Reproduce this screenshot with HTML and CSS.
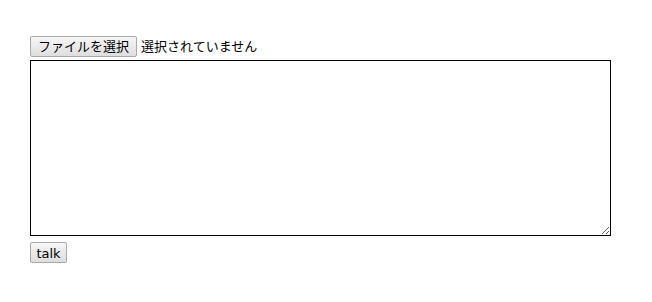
FILE: index.html
```html
<!DOCTYPE html>
<html lang="ja">
<head>
<meta charset="utf-8">
<title>talk</title>
<link rel="stylesheet" href="styles.css">
</head>
<body>
<form class="talk-form">
  <div class="file-row">
    <label class="btn file-btn">ファイルを選択<input type="file" class="file-input"></label>
    <span class="file-status">選択されていません</span>
  </div>
  <textarea class="message"></textarea>
  <div class="actions">
    <button type="button" class="btn talk-btn">talk</button>
  </div>
</form>
</body>
</html>
```
FILE: styles.css
```css
html, body {
  margin: 0;
  padding: 0;
  background: #fff;
}
body {
  padding: 36px 30px 0 30px;
  font-family: "DejaVu Sans", "Noto Sans CJK JP", sans-serif;
  font-size: 13px;
  color: #000;
}
.talk-form {
  display: flex;
  flex-direction: column;
  align-items: flex-start;
}
.file-row {
  display: flex;
  align-items: center;
  gap: 4px;
  height: 21px;
}
.btn {
  display: inline-flex;
  align-items: center;
  justify-content: center;
  box-sizing: border-box;
  height: 21px;
  padding: 0 7px;
  border: 1px solid #a9a9a9;
  border-radius: 2px;
  background: linear-gradient(#f6f6f6, #dedede);
  font-family: "DejaVu Sans", "Noto Sans CJK JP", sans-serif;
  font-size: 13px;
  line-height: 1;
  color: #000;
  cursor: pointer;
}
.file-btn {
  font-family: "Noto Sans CJK JP", sans-serif;
  padding-bottom: 3px;
}
.talk-btn {
  width: 37px;
  padding: 1px 0 0 0;
}
.file-input {
  display: none;
}
.file-status {
  font-family: "Noto Sans CJK JP", sans-serif;
  line-height: 1;
  margin-top: -3px;
}
.message {
  box-sizing: border-box;
  width: 581px;
  height: 176px;
  margin: 3px 0 0 0;
  border: 1px solid #000;
  padding: 2px;
  resize: both;
}
.actions {
  margin-top: 6px;
}
```
